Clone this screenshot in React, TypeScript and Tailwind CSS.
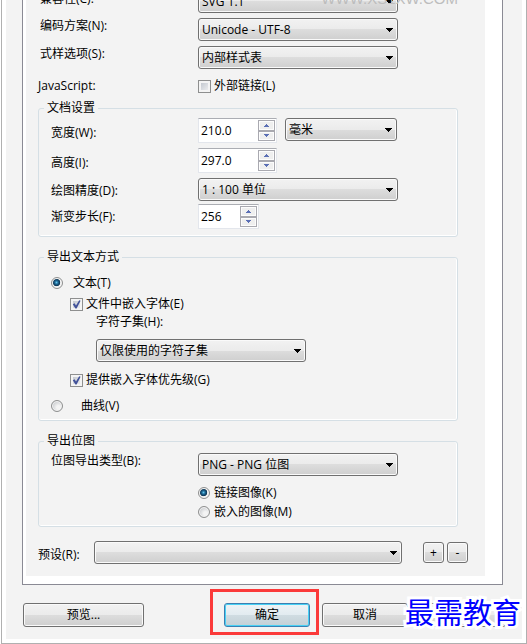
import { useState, type ReactNode } from "react";
import clsx from "clsx";

const face =
  "border border-[#707070] rounded-[3px] bg-[linear-gradient(#f2f2f2_0%,#ebebeb_50%,#dddddd_50%,#cfcfcf_100%)] shadow-[inset_0_0_0_1px_#fafafa]";

type DropdownProps = {
  id: string;
  label?: string;
  options: string[];
  className?: string;
};

function Dropdown({ id, label, options, className }: DropdownProps) {
  return (
    <div className={clsx("relative h-[23px]", className)}>
      <select
        id={id}
        aria-label={label}
        className={clsx("block h-full w-full appearance-none pl-[3px] pr-5", face)}
      >
        {options.map((option) => (
          <option key={option}>{option}</option>
        ))}
      </select>
      <svg
        viewBox="0 0 7 4"
        shapeRendering="crispEdges"
        className="pointer-events-none absolute right-[5px] top-[10px] h-1 w-[7px]"
      >
        <path d="M0 0H7V1H6V2H5V3H4V4H3V3H2V2H1V1H0Z" fill="#000" />
      </svg>
    </div>
  );
}

type SpinnerProps = {
  id: string;
  initial: number;
  digits: number;
  className?: string;
};

function Spinner({ id, initial, digits, className }: SpinnerProps) {
  const [value, setValue] = useState(initial.toFixed(digits));

  const step = (delta: number) =>
    setValue((current) => (Number(current) + delta).toFixed(digits));

  const button =
    "flex h-[11px] items-center justify-center border border-[#a9a9b0] bg-[#efefef] shadow-[inset_0_0_0_1px_#fcfcfc]";

  return (
    <div
      className={clsx(
        "flex h-[25px] border border-[#e3e6ec] border-t-[#abadb3] bg-white p-px",
        className
      )}
    >
      <input
        id={id}
        value={value}
        onChange={(e) => setValue(e.target.value)}
        className="h-[21px] w-0 min-w-0 flex-1 bg-transparent pl-px outline-none"
      />
      <div className="flex w-[17px] flex-col">
        <button aria-label="+" className={button} onClick={() => step(1)}>
          <svg viewBox="0 0 5 3" shapeRendering="crispEdges" className="h-[3px] w-[5px]">
            <path d="M2 0H3V1H4V2H5V3H0V2H1V1H2Z" fill="#5b6fb5" />
          </svg>
        </button>
        <button aria-label="-" className={button} onClick={() => step(-1)}>
          <svg viewBox="0 0 5 3" shapeRendering="crispEdges" className="h-[3px] w-[5px]">
            <path d="M0 0H5V1H4V2H3V3H2V2H1V1H0Z" fill="#5b6fb5" />
          </svg>
        </button>
      </div>
    </div>
  );
}

type ToggleProps = {
  children: ReactNode;
  name?: string;
  defaultChecked?: boolean;
  className?: string;
};

function CheckBox({ children, defaultChecked, className }: ToggleProps) {
  return (
    <label className={clsx("flex items-center gap-[3px]", className)}>
      <span className="relative size-[13px] shrink-0">
        <input
          type="checkbox"
          defaultChecked={defaultChecked}
          className="peer block size-[13px] appearance-none border border-[#8e8f8f] bg-[linear-gradient(135deg,#b9bfc8,#f6f6f6)] shadow-[inset_0_0_0_2px_#f4f4f4]"
        />
        <svg
          viewBox="0 0 13 13"
          className="pointer-events-none absolute inset-0 hidden size-[13px] peer-checked:block"
        >
          <path d="M2.8 6.2L4.6 5.2L6 7.4L9.2 2.2L10.6 2.8L6.6 10.5H5.4Z" fill="#42529a" />
        </svg>
      </span>
      {children}
    </label>
  );
}

function Radio({ children, name, defaultChecked, className }: ToggleProps) {
  return (
    <label className={clsx("flex items-center", className)}>
      <input
        type="radio"
        name={name}
        defaultChecked={defaultChecked}
        className="size-3 shrink-0 appearance-none rounded-full border border-[#8e8f8f] bg-[radial-gradient(circle_at_65%_65%,#f4f4f4_20%,#c9cbce_75%)] shadow-[inset_0_0_0_1px_#f4f4f4] checked:bg-[radial-gradient(circle_at_45%_45%,#63c6ee_0,#1c6591_22%,#0d3553_44%,#f0f0f0_52%)]"
      />
      {children}
    </label>
  );
}

type GroupProps = { title: string; className?: string; children: ReactNode };

function Group({ title, className, children }: GroupProps) {
  return (
    <fieldset
      className={clsx(
        "min-w-0 rounded-[3px] border border-[#d5dfe5] pl-3 shadow-[inset_0_-1px_0_#fff,inset_-1px_0_0_#fff]",
        className
      )}
    >
      <legend className="-ml-[7px] px-[3px] leading-4">{title}</legend>
      {children}
    </fieldset>
  );
}

type RowProps = {
  label: string;
  htmlFor: string;
  className?: string;
  children: ReactNode;
};

function Row({ label, htmlFor, className, children }: RowProps) {
  return (
    <div className={clsx("flex items-start", className)}>
      <label htmlFor={htmlFor} className="flex w-[147px] shrink-0 items-center self-stretch">
        {label}
      </label>
      {children}
    </div>
  );
}

export default function App() {
  return (
    <div className="relative overflow-hidden bg-white pl-px font-['Open_Sans','Noto_Sans_CJK_SC',sans-serif] text-xs leading-4 text-black">
      <div className="border border-t-0 border-[#b0b0b0] px-1 pb-1">
        <div className="bg-[#f3f3f3] px-4 pb-3">
          {/* Scrolled settings pane */}
          <div className="mr-[3px] border border-t-0 border-[#8a8a94] bg-white pb-2 pl-[3px] pr-[17px]">
            <div className="bg-[#f3f3f3] pb-3 pl-3 pr-[27px]">
              <div className="-mt-[11px] flex flex-col pl-0.5">
                <div className="flex h-7 items-start">
                  <label htmlFor="compat" className="w-[158px] shrink-0 pt-0.5">
                    兼容性(C):
                  </label>
                  <Dropdown
                    id="compat"
                    options={["SVG 1.1", "SVG 1.0"]}
                    className="mt-px w-[200px]"
                  />
                </div>
                <div className="flex h-7 items-start">
                  <label htmlFor="encoding" className="w-[158px] shrink-0 pt-px">
                    编码方案(N):
                  </label>
                  <Dropdown
                    id="encoding"
                    options={["Unicode - UTF-8", "Unicode - UTF-16"]}
                    className="mt-px w-[200px]"
                  />
                </div>
                <div className="flex h-7 items-start">
                  <label htmlFor="style" className="w-[158px] shrink-0 pt-px">
                    式样选项(S):
                  </label>
                  <Dropdown
                    id="style"
                    options={["内部样式表", "外部样式表"]}
                    className="mt-px w-[200px]"
                  />
                </div>
              </div>
              <div className="flex items-center pt-[5px] pb-1.5">
                <span className="w-40 shrink-0">JavaScript:</span>
                <CheckBox>外部链接(L)</CheckBox>
              </div>

              <Group title="文档设置" className="pb-[7px]">
                <div className="pt-0.5">
                  <Row label="宽度(W):" htmlFor="width" className="h-[30px]">
                    <Spinner id="width" initial={210} digits={1} className="w-[79px]" />
                    <Dropdown
                      id="unit"
                      label="单位"
                      options={["毫米", "厘米", "像素"]}
                      className="ml-2 w-28"
                    />
                  </Row>
                  <Row label="高度(I):" htmlFor="height" className="h-[30px]">
                    <Spinner id="height" initial={297} digits={1} className="w-[79px]" />
                  </Row>
                  <Row label="绘图精度(D):" htmlFor="precision" className="h-[26px]">
                    <Dropdown
                      id="precision"
                      options={["1 : 100 单位", "1 : 10 单位"]}
                      className="w-[200px]"
                    />
                  </Row>
                  <Row label="渐变步长(F):" htmlFor="steps" className="h-[25px]">
                    <Spinner id="steps" initial={256} digits={0} className="w-[61px]" />
                  </Row>
                </div>
              </Group>

              <Group title="导出文本方式" className="mt-3 pb-1.5">
                <Radio name="text-mode" defaultChecked className="gap-2.5 pt-2.5 pb-1">
                  文本(T)
                </Radio>
                <CheckBox defaultChecked className="pl-[19px] pt-px">
                  文件中嵌入字体(E)
                </CheckBox>
                <div className="pl-[45px] pt-0.5">
                  <label htmlFor="subset">字符子集(H):</label>
                  <Dropdown
                    id="subset"
                    options={["仅限使用的字符子集", "所有字符"]}
                    className="mt-[9px] w-[210px]"
                  />
                </div>
                <CheckBox defaultChecked className="pl-[19px] pt-2.5">
                  提供嵌入字体优先级(G)
                </CheckBox>
                <Radio name="text-mode" className="gap-[18px] pt-2.5">
                  曲线(V)
                </Radio>
              </Group>

              <Group title="导出位图" className="mt-3 pb-1.5">
                <div className="flex items-start pt-1">
                  <label htmlFor="bitmap" className="w-[147px] shrink-0">
                    位图导出类型(B):
                  </label>
                  <Dropdown
                    id="bitmap"
                    options={["PNG - PNG 位图", "JPG - JPEG 位图"]}
                    className="w-[200px]"
                  />
                </div>
                <div className="flex flex-col gap-[3px] pl-[147px] pt-[9px]">
                  <Radio name="image-mode" defaultChecked className="gap-1">
                    链接图像(K)
                  </Radio>
                  <Radio name="image-mode" className="gap-1">
                    嵌入的图像(M)
                  </Radio>
                </div>
              </Group>

              <div className="-mr-[10px] mt-3.5 flex items-center">
                <label htmlFor="preset" className="w-14 shrink-0 pt-1">
                  预设(R):
                </label>
                <Dropdown id="preset" options={[""]} className="flex-1" />
                <button className={clsx("ml-[21px] size-[21px] leading-3", face)}>+</button>
                <button className={clsx("ml-[3px] size-[21px] leading-3", face)}>-</button>
              </div>
            </div>
          </div>

          {/* Dialog buttons */}
          <div className="mt-[18px] flex items-center pl-px">
            <button className={clsx("h-6 w-[121px]", face)}>预览...</button>
            <div className="ml-auto flex gap-3">
              <div className="relative">
                <button className="h-6 w-[86px] rounded-[3px] border border-[#3c7fb1] bg-[linear-gradient(#eef3f6_0%,#e2ebf0_50%,#d0dce2_50%,#c3d0d6_100%)] shadow-[inset_0_0_0_1px_#48d1f5]">
                  确定
                </button>
                <div className="pointer-events-none absolute -top-3.5 -right-[9px] -bottom-2 -left-3.5 border-3 border-[#fb3a3a]" />
              </div>
              <button className={clsx("h-6 w-[86px]", face)}>取消</button>
              <button className={clsx("h-6 w-[86px]", face)}>帮助</button>
            </div>
          </div>
        </div>
      </div>

      {/* Watermarks */}
      <div className="pointer-events-none absolute -top-[11px] right-[69px] font-['Liberation_Sans',sans-serif] text-[15px] leading-5 text-[#bdbdbd]">
        WWW.XS1XW.COM
      </div>
      <div className="pointer-events-none absolute right-1.5 bottom-[15px] font-['Noto_Sans_CJK_SC',sans-serif] text-[29px] leading-9 text-[#0000ff] [-webkit-text-stroke:6px_#fff] [paint-order:stroke_fill]">
        最需教育
      </div>
    </div>
  );
}
